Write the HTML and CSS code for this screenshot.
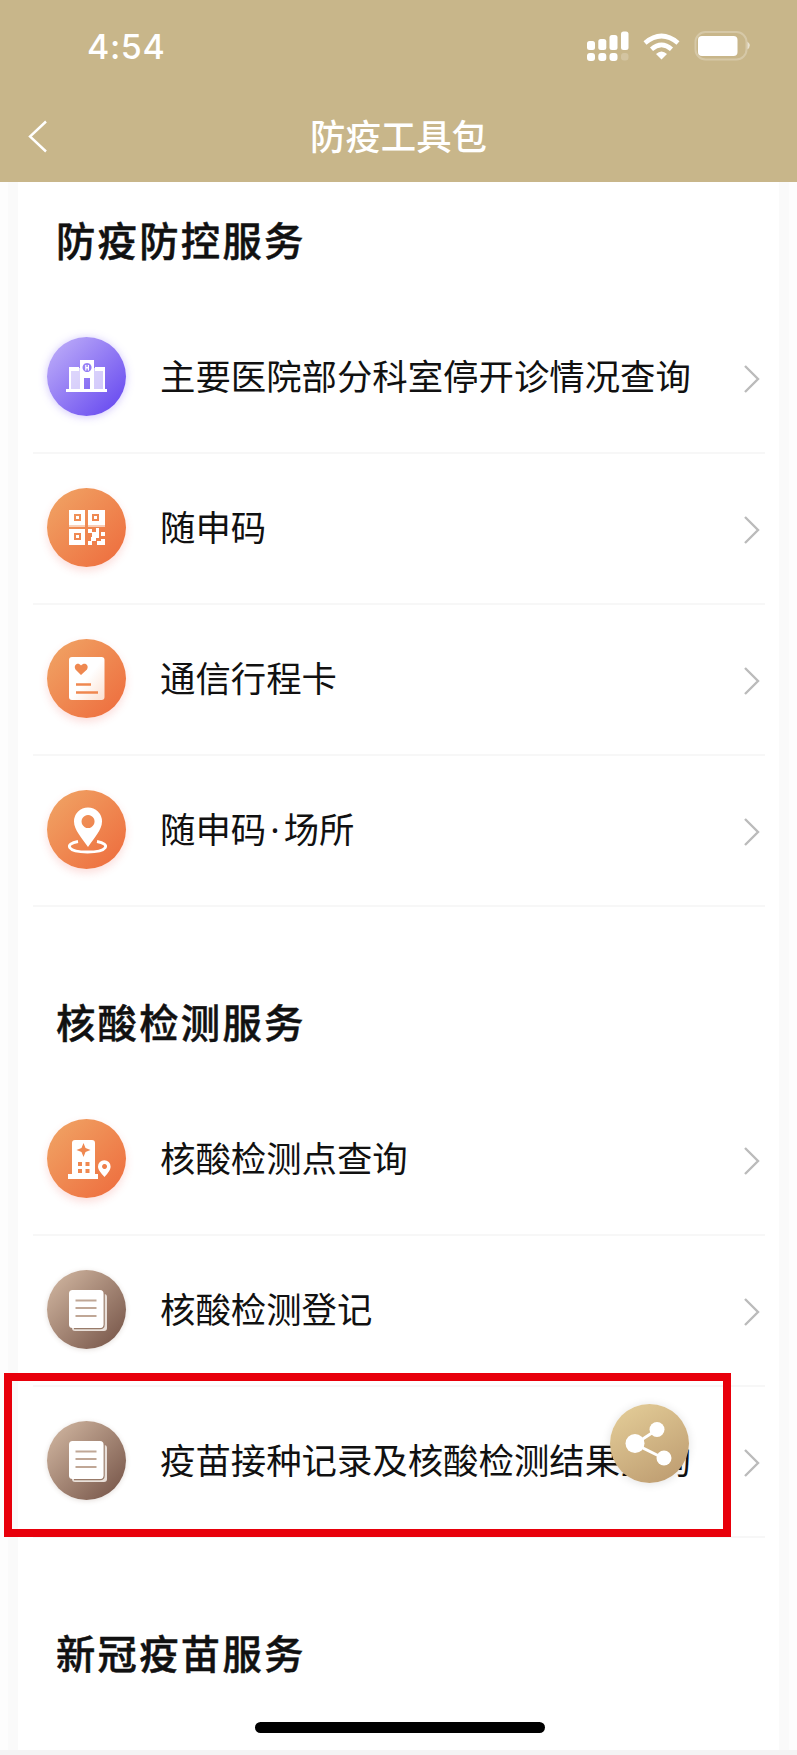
FILE: index.html
```
<!DOCTYPE html>
<html lang="zh-CN">
<head>
    <meta charset="UTF-8">
    <meta name="viewport" content="width=device-width, initial-scale=1.0">
    <title>防疫工具包</title>
    <link rel="stylesheet" href="styles.css">
</head>
<body>
    <header>
        <div class="status-bar">
            <span class="time">4:54</span>
            <svg class="status-icons" width="166" height="34" viewBox="0 0 166 34" fill="#fff">
                <!-- signal -->
                <rect x="2" y="11" width="8" height="9" rx="2.500"/>
                <rect x="13.300" y="9" width="8" height="11" rx="2.500"/>
                <rect x="24.500" y="5" width="8" height="15" rx="2.500"/>
                <rect x="36" y="1.5" width="7.5" height="18.5" rx="2.500"/>
                <rect x="2" y="23" width="8" height="8" rx="3"/>
                <rect x="13.300" y="23" width="8" height="8" rx="3"/>
                <rect x="24.500" y="23" width="8" height="8" rx="3"/>
                <rect x="36" y="23" width="7.5" height="7.5" rx="3" opacity=".2"/>
                <!-- wifi -->
                <g fill="none" stroke="#fff" stroke-width="4.6">
                    <path d="M60 13Q76.500 -1 93 13"/>
                    <path d="M66.500 19.300Q76.500 10.500 86.500 19.300"/>
                </g>
                <path d="M71 24Q76.500 19 82 24L76.500 29.500Z"/>
                <!-- battery -->
                <rect x="110.500" y="2" width="51" height="27.500" rx="10" fill="none" stroke="#fff" stroke-width="2" opacity=".25"/>
                <rect x="113" y="6" width="39.500" height="20" rx="4"/>
                <path d="M162.500 11.500Q167 15.500 162.500 19.500Z" opacity=".6"/>
            </svg>
        </div>
        <div class="nav-bar">
            <svg class="back" width="20" height="34" viewBox="0 0 20 34"><path d="M18 1.500L2 16.500L18 31.500"/></svg>
            <h1>防疫工具包</h1>
        </div>
    </header>

    <main>
        <section>
            <h2>防疫防控服务</h2>
            <ul>
                <li>
                    <span class="icon purple">
                        <svg viewBox="0 0 79 79">
                            <path fill="#fff" opacity=".65" d="M22 31h11v22H22zM46 31h12v22H46z"/>
                            <path fill="#fff" d="M22 30h10v4H22zM48 30h10v4H48zM22 30h2v23h-2zM56 30h2v23h-2zM19 52h41v3H19z"/>
                            <path fill="#fff" fill-rule="evenodd" d="M33 23h14v30h-4V41h-6v12h-4zM40 26a4.500 4.500 0 1 0 .1 0z"/>
                            <path fill="#fff" d="M38.200 28h1.200v2h1.400v-2h1.200v5.500h-1.200v-2h-1.400v2h-1.200z"/>
                        </svg>
                    </span>
                    <span class="name">主要医院部分科室停开诊情况查询</span>
                    <svg class="arrow" viewBox="0 0 18 30"><path d="M2 2L15 15L2 28"/></svg>
                </li>
                <li>
                    <span class="icon orange">
                        <svg viewBox="0 0 79 79">
                            <path fill="#fff" fill-rule="evenodd" d="M22 22h16v15H22zM27 26v7h7v-7zM41 22h17v15H41zM45 26v7h7v-7zM22 41h16v16H22zM27 45v7h7v-7z"/>
                            <path fill="#fff" opacity=".6" d="M22 37h16v2H22zM41 37h17v2H41z"/>
                            <path fill="#fff" d="M29 28h3v3h-3zM47 28h3v3h-3zM29 47h3v3h-3zM41 41h4v4h-4zM45 44h4v5h-4zM41 53h4v4h-4zM44 49h5v4h-5zM49 40h3v10h-3zM54 44h4v4h-4zM54 51h4v6h-8v-4h4z"/>
                        </svg>
                    </span>
                    <span class="name">随申码</span>
                    <svg class="arrow" viewBox="0 0 18 30"><path d="M2 2L15 15L2 28"/></svg>
                </li>
                <li>
                    <span class="icon orange">
                        <svg viewBox="0 0 79 79">
                            <rect x="22" y="18" width="35.500" height="43" rx="3" fill="url(#paper)"/>
                            <path fill="#ef8850" d="M34 36L28.500 30.500C26 26 31 22.500 34 26.500C37.500 22.500 42.500 26 40 30.500Z"/>
                            <path stroke="#ef8850" stroke-width="2.500" d="M29 45.500h15M29 53.500h22"/>
                        </svg>
                    </span>
                    <span class="name">通信行程卡</span>
                    <svg class="arrow" viewBox="0 0 18 30"><path d="M2 2L15 15L2 28"/></svg>
                </li>
                <li>
                    <span class="icon orange">
                        <svg viewBox="0 0 79 79">
                            <path fill="none" stroke="#fff" stroke-width="2.800" d="M31 51.500C17 54 20 62 40.500 62C61 62 64 54 50 51.500"/>
                            <path fill="#fff" fill-rule="evenodd" d="M41 57C35 48 27 40 27 31.500a14 14 0 0 1 28 0C55 40 47 48 41 57zM41 25a6.500 6.500 0 1 0 .1 0z"/>
                        </svg>
                    </span>
                    <span class="name">随申码<span class="dot">·</span>场所</span>
                    <svg class="arrow" viewBox="0 0 18 30"><path d="M2 2L15 15L2 28"/></svg>
                </li>
            </ul>
        </section>

        <section>
            <h2>核酸检测服务</h2>
            <ul>
                <li>
                    <span class="icon orange">
                        <svg viewBox="0 0 79 79">
                            <path fill="#fff" d="M28 21h17q3 0 3 3v31h3v5H21v-5h4V24q0-3 3-3z"/>
                            <path fill="#ef8850" d="M36.500 24l2 5 5 2-5 2-2 5-2-5-5-2 5-2zM31 43h4v4h-4zM38.500 43h4v4h-4zM31 50h4v4h-4zM38.500 50h4v4h-4z"/>
                            <path fill="#fff" fill-rule="evenodd" d="M57.500 58C54 54 51 51 51 47.500a6.300 6.300 0 0 1 12.600 0C63.600 51 61 54 57.500 58zM57.500 45a2.500 2.500 0 1 0 .1 0z"/>
                        </svg>
                    </span>
                    <span class="name">核酸检测点查询</span>
                    <svg class="arrow" viewBox="0 0 18 30"><path d="M2 2L15 15L2 28"/></svg>
                </li>
                <li>
                    <span class="icon brown">
                        <svg viewBox="0 0 79 79">
                            <rect x="25" y="24" width="35" height="37" rx="3" fill="#e9e0da"/>
                            <path fill="none" stroke="#987b6a" stroke-width="1.500" d="M27 58.500h26q4 0 4-4V24"/>
                            <rect x="22" y="20" width="34.500" height="38" rx="3.500" fill="#fff"/>
                            <path stroke="#c0a796" stroke-width="2.200" d="M28.500 30.500h21M28.500 38h21M28.500 46h21"/>
                        </svg>
                    </span>
                    <span class="name">核酸检测登记</span>
                    <svg class="arrow" viewBox="0 0 18 30"><path d="M2 2L15 15L2 28"/></svg>
                </li>
                <li class="marked">
                    <span class="icon brown">
                        <svg viewBox="0 0 79 79">
                            <rect x="25" y="24" width="35" height="37" rx="3" fill="#e9e0da"/>
                            <path fill="none" stroke="#987b6a" stroke-width="1.500" d="M27 58.500h26q4 0 4-4V24"/>
                            <rect x="22" y="20" width="34.500" height="38" rx="3.500" fill="#fff"/>
                            <path stroke="#c0a796" stroke-width="2.200" d="M28.500 30.500h21M28.500 38h21M28.500 46h21"/>
                        </svg>
                    </span>
                    <span class="name">疫苗接种记录及核酸检测结果查询</span>
                    <svg class="arrow" viewBox="0 0 18 30"><path d="M2 2L15 15L2 28"/></svg>
                    <span class="share">
                        <svg viewBox="0 0 79 79" fill="#fff">
                            <path fill="none" stroke="#fff" stroke-width="3" d="M46.500 26L25 40L54 54.500"/>
                            <circle cx="25" cy="39.500" r="9.500"/>
                            <circle cx="47" cy="25.500" r="7.500"/>
                            <circle cx="54" cy="54" r="7.500"/>
                        </svg>
                    </span>
                </li>
            </ul>
        </section>

        <section>
            <h2>新冠疫苗服务</h2>
        </section>
    </main>

    <div class="home-bar"></div>

    <svg width="0" height="0" class="defs">
        <linearGradient id="paper" x1="0" y1="0" x2="1" y2="1">
            <stop offset=".5" stop-color="#fff"/>
            <stop offset="1" stop-color="#fbe0d0"/>
        </linearGradient>
    </svg>
</body>
</html>
```

FILE: styles.css
```
/* General Page Styles */
* {
    box-sizing: border-box;
}

body {
    font-family: "Noto Sans CJK SC", sans-serif;
    margin: 0;
    height: 1755px;
    position: relative;
    overflow: hidden;
    background: #fdfdfd;
    color: #111;
    border-bottom: 5px solid #f4f4f4;
}

h1, h2, ul {
    margin: 0;
    padding: 0;
}

/* Header */
header {
    height: 182px;
    background: #c8b68a;
    color: white;
}

.status-bar {
    height: 92px;
    display: flex;
    justify-content: space-between;
    align-items: center;
    padding: 0 46px 0 87px;
}

.time {
    font-family: Inter, sans-serif;
    font-size: 34px;
    font-weight: 500;
    letter-spacing: 0.6px;
}

.status-icons {
    margin-top: 2px;
}

.nav-bar {
    height: 90px;
    display: flex;
    align-items: center;
    padding: 0 28px;
}

.back {
    fill: none;
    stroke: white;
    stroke-width: 2.4;
}

.nav-bar h1 {
    flex: 1;
    margin-right: 20px;
    padding-bottom: 6px;
    text-align: center;
    font-size: 35.4px;
    font-weight: 500;
}

/* Service list */
main {
    margin: 0 18px;
    height: 1568px;
    background: white;
    box-shadow: 0 8px 0 10px #fafafa;
    clip-path: inset(0 -18px -10px -18px);
}

section + section {
    margin-top: 57px;
}

h2 {
    padding: 0 0 4px 38px;
    margin-bottom: 3px;
    font-size: 39.3px;
    line-height: 114px;
    letter-spacing: 2.3px;
    font-weight: 500;
    -webkit-text-stroke: 0.5px #111;
}

ul {
    list-style: none;
    margin: 0 14px 0 15px;
}

li {
    position: relative;
    height: 151px;
    display: flex;
    align-items: center;
    padding: 0 4px 2px 14px;
    border-bottom: 2px solid #f7f7f7;
}

.icon, .share {
    width: 79px;
    height: 79px;
    border-radius: 50%;
}

.icon svg, .share svg {
    display: block;
}

.purple {
    background: linear-gradient(135deg, #b9a8f8 10%, #6a4df0 90%);
    box-shadow: 0 1px 8px rgba(120, 90, 245, 0.35);
}

.orange {
    background: linear-gradient(135deg, #f0a062 10%, #ee7040 90%);
    box-shadow: 0 4px 8px rgba(240, 90, 80, 0.2);
}

.brown {
    background: linear-gradient(135deg, #cbb09b 10%, #7c5b4e 90%);
    box-shadow: 0 1px 5px rgba(120, 90, 75, 0.2);
}

.name {
    flex: 1;
    margin-left: 34px;
    padding-bottom: 5px;
    font-size: 35.4px;
    white-space: nowrap;
}

.dot {
    font-family: "Noto Sans", sans-serif;
    line-height: 1;
    margin: 0 4px;
}

.arrow {
    width: 18px;
    height: 30px;
    margin-top: 4px;
    fill: none;
    stroke: #bbb;
    stroke-width: 2.4;
}

/* Red frame round the last row */
.marked::after {
    content: "";
    box-sizing: border-box;
    position: absolute;
    left: -29px;
    top: -14px;
    width: 727px;
    height: 164px;
    border: 8px solid #e8000b;
}

.share {
    position: absolute;
    left: 577px;
    top: 17px;
    background: linear-gradient(150deg, #dfc793 15%, #bf9e72 90%);
    box-shadow: 0 1px 10px rgba(0, 0, 0, 0.12);
}

/* Home indicator */
.home-bar {
    position: absolute;
    left: 255px;
    top: 1722px;
    width: 290px;
    height: 11px;
    border-radius: 6px;
    background: black;
}

.defs {
    position: absolute;
}
```
